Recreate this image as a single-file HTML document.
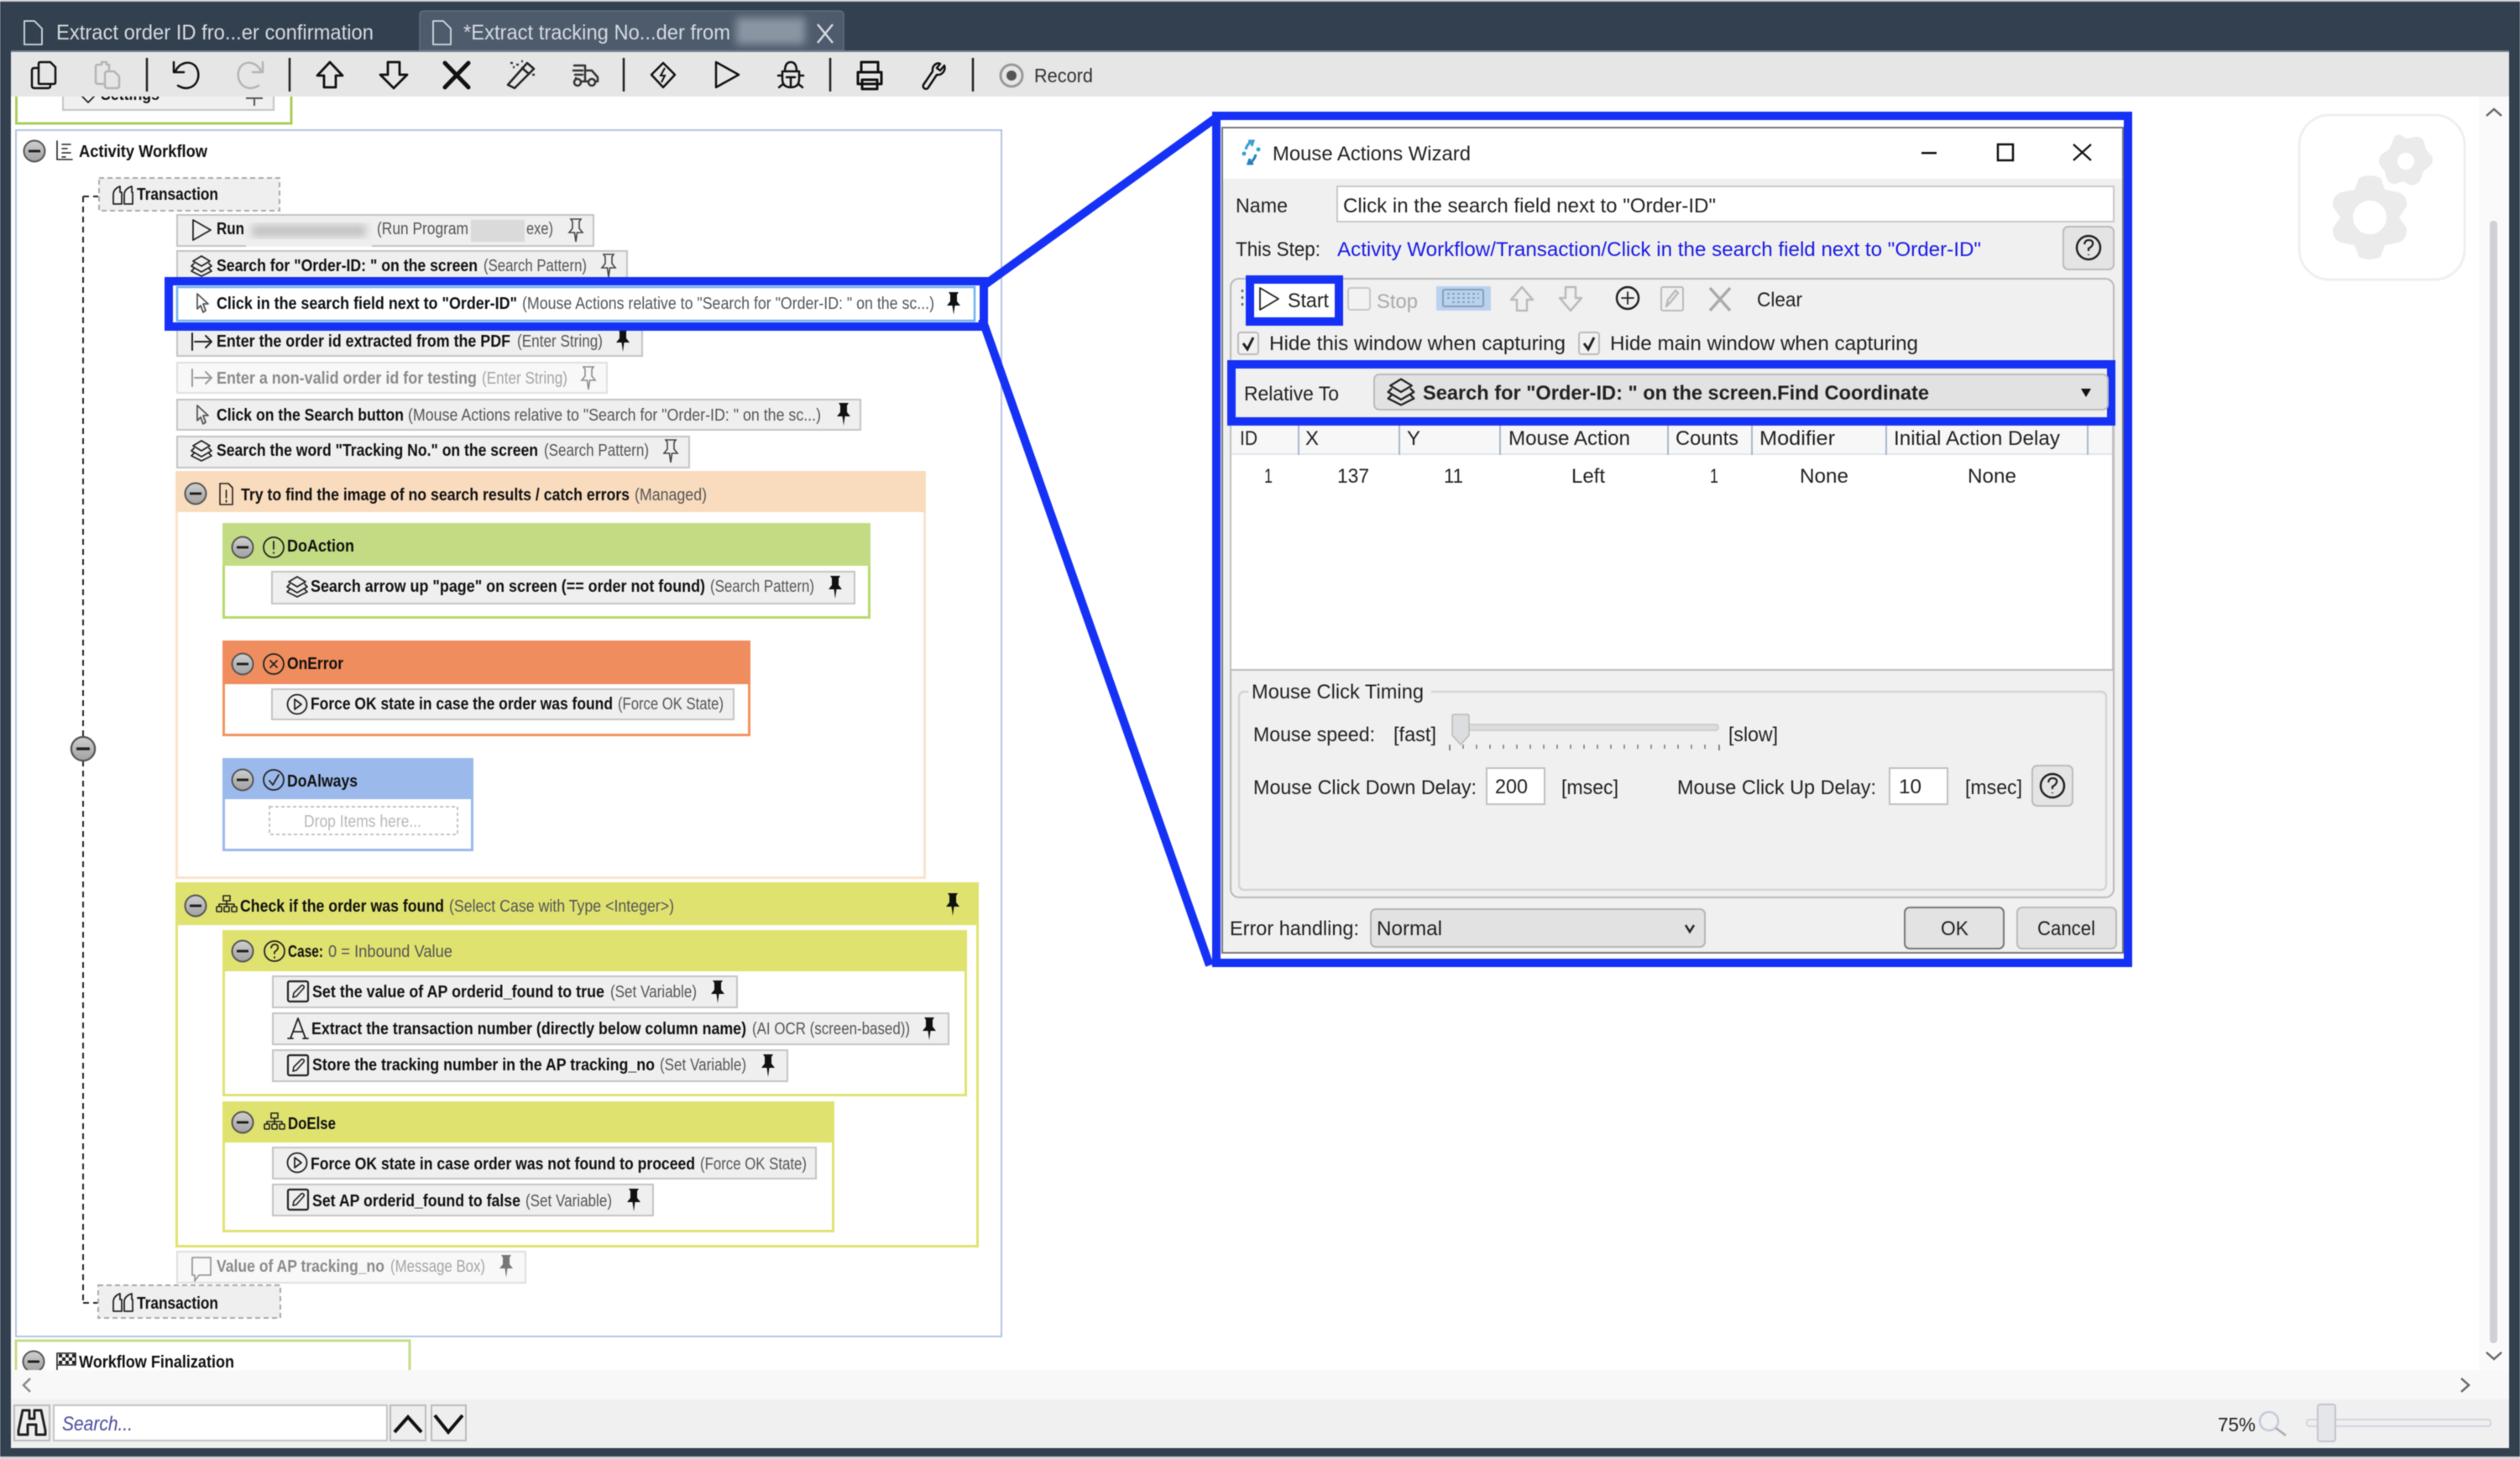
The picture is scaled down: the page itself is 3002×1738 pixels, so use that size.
<!DOCTYPE html>
<html><head><meta charset="utf-8"><title>Mouse Actions Wizard</title>
<style>
html,body{margin:0;padding:0;background:#fff;width:3002px;height:1738px;overflow:hidden}
svg{display:block;filter:blur(0.6px)}
text{font-family:"Liberation Sans",sans-serif;font-size:21px;fill:#111}
.b{font-weight:bold;font-size:20px;fill:#111}
.s{font-size:20px;fill:#555}
.gb{font-weight:bold;font-size:20px;fill:#8a8a8a}
.gs{font-size:20px;fill:#a5a5a5}
.d{font-size:24px;fill:#222}
.db{font-size:24px;fill:#222;font-weight:bold}
.t{font-size:25px;fill:#d5dae0}
.c{fill:#efefef;stroke:#c4c4c4;stroke-width:2}
.cd{fill:#f8f8f8;stroke:#e0e0e0;stroke-width:2}
.ic{fill:none;stroke:#222;stroke-width:1.8;stroke-linejoin:round;stroke-linecap:round}
.tb{fill:none;stroke:#111;stroke-width:3;stroke-linejoin:round;stroke-linecap:round}
.tg{fill:none;stroke:#b5b5b5;stroke-width:3;stroke-linejoin:round;stroke-linecap:round}
.dg{fill:none;stroke:#bbb;stroke-width:2.5;stroke-linejoin:round;stroke-linecap:round}
.sep{stroke:#222;stroke-width:2.5}
</style></head><body>
<svg width="3002" height="1738" viewBox="0 0 3002 1738" xmlns="http://www.w3.org/2000/svg">
<defs>
<linearGradient id="gm" x1="0" y1="0" x2="0" y2="1"><stop offset="0" stop-color="#cfcfcf"/><stop offset="1" stop-color="#a0a0a0"/></linearGradient>
<filter id="bl" x="-20%" y="-20%" width="140%" height="140%"><feGaussianBlur stdDeviation="5"/></filter>
<g id="min"><circle r="12.500" fill="url(#gm)" stroke="#555" stroke-width="2"/><rect x="-7" y="-1.500" width="14" height="3" fill="#222"/></g>
<g id="pf"><path d="M-6-14H6L4-11V-3L8 2H1.500L0 13-1.500 2H-8L-4-3V-11Z" fill="#111"/></g>
<g id="po"><path d="M-6-14H6L4-11V-3L8 2H1.500L0 13-1.500 2H-8L-4-3V-11Z" fill="none" stroke="#444" stroke-width="1.600"/></g>
<g id="pg"><path d="M-6-14H6L4-11V-3L8 2H1.500L0 13-1.500 2H-8L-4-3V-11Z" fill="#777"/></g>
<g id="st" class="ic"><path d="M0-12 10-6 0 0-10-6Z"/><path d="M-9-3-12 0 0 7 12 0 9-3"/><path d="M-9 3-12 6 0 12 12 6 9 3"/></g>
<g id="cu" class="ic" style="stroke:#555"><path d="M-5-11V7L-1 3 2 11 5 9 2 1H8Z"/></g>
<g id="en" class="ic" style="stroke-width:2"><path d="M-11-10V10M-8 0H12M5-7 12 0 5 7"/></g>
<g id="eg" class="ic" style="stroke:#999;stroke-width:2"><path d="M-11-10V10M-8 0H12M5-7 12 0 5 7"/></g>
<g id="ed" class="ic" style="stroke-width:2.200"><rect x="-12" y="-12" width="24" height="24" rx="2"/><path d="M-6 7-5 2 4-7Q6-8 7-6 8-5 6-3L-2 6Z" style="stroke-width:1.600"/></g>
<g id="pc" class="ic"><circle r="11.500"/><path d="M-3-6 5 0-3 6Z"/></g>
<g id="tr" class="ic"><path d="M-11 11V0Q-11-7-3-10V-3H-1V11ZM2 11V0Q2-7 11-10V-3H12V11Z"/></g>
<g id="tree" class="ic" style="stroke-width:1.600"><rect x="-4" y="-10" width="8" height="6"/><path d="M0-4V0M-9 3V0H9V3M0 0V3"/><rect x="-12" y="3" width="6" height="6" rx="1"/><rect x="-3" y="3" width="6" height="6" rx="1"/><rect x="6" y="3" width="6" height="6" rx="1"/></g>
</defs>

<!-- frame -->
<rect width="3002" height="1738" fill="#33404f"/>
<rect x="0" y="0" width="3002" height="2" fill="#c9ccd0"/>
<rect x="0" y="1735" width="3002" height="3" fill="#cfd2d6"/>
<rect x="13" y="115" width="2976" height="1610" fill="#fff"/>

<!-- top green box (under toolbar) -->
<path d="M19.500 100V147H347V100" fill="#fff" stroke="#a8cf5a" stroke-width="3"/>
<rect x="75" y="100" width="251" height="31" fill="#f0f0f0" stroke="#c4c4c4" stroke-width="2"/>
<path class="ic" d="M95 112 105 122 115 112"/>
<text class="b" x="120" y="119" textLength="70" lengthAdjust="spacingAndGlyphs">Settings</text>
<path d="M293 117H313M303 117V126" fill="none" stroke="#555" stroke-width="2"/>

<!-- tabs -->
<path class="ic" style="stroke:#d5dae0" d="M29 25H41L50 34V53H29Z"/>
<text class="t" x="67" y="47" textLength="378" lengthAdjust="spacingAndGlyphs">Extract order ID fro...er confirmation</text>
<path d="M500 60V18Q500 13 505 13H1000Q1005 13 1005 18V60Z" fill="#4d5b6d" stroke="#5f6c7d" stroke-width="1.500"/>
<path class="ic" style="stroke:#d5dae0" d="M516 25H528L537 34V53H516Z"/>
<text class="t" x="552" y="47" textLength="318" lengthAdjust="spacingAndGlyphs">*Extract tracking No...der from</text>
<rect x="877" y="21" width="82" height="32" fill="#8a95a3" filter="url(#bl)"/>
<path d="M974 29 992 51M992 29 974 51" stroke="#d5dae0" stroke-width="2.500" fill="none"/>

<!-- toolbar -->
<rect x="13" y="61" width="2976" height="54" fill="#e6e6e6"/>
<rect x="13" y="60" width="2976" height="2" fill="#75808d"/>
<path class="tb" style="stroke-width:2.500" d="M46 99V76Q46 74 48 74H60L66 80V98Q66 100 64 100H47Q46 100 46 99ZM46 81H41Q38 81 38 84V102Q38 105 41 105H57Q60 105 60 102V100"/>
<path class="tg" style="stroke-width:2.500" d="M125 100H117Q114 100 114 97V80Q114 77 117 77H121V74H127V77H130V85M125 88Q125 85 128 85H136L142 91V102Q142 105 139 105H128Q125 105 125 102Z"/>
<line class="sep" x1="175" y1="69" x2="175" y2="109"/>
<path class="tb" style="stroke-width:2.500" d="M207 74V86H219M209 85C213 75 226 71 233 79 240 88 236 105 221 105 217 105 214 103 212 102"/>
<path class="tg" style="stroke-width:2.500" d="M313 74V86H301M311 85C307 75 294 71 287 79 280 88 284 105 299 105 303 105 306 103 308 102"/>
<line class="sep" x1="345" y1="69" x2="345" y2="109"/>
<path class="tb" style="stroke-width:2.800" d="M393 74 408 90H400V104H386V90H378Z"/>
<path class="tb" style="stroke-width:2.800" d="M462 74H476V89H485L469 105 453 89H462Z"/>
<path d="M530 75 558 104M558 75 530 104" stroke="#111" stroke-width="5" stroke-linecap="round" fill="none"/>
<path class="ic" style="stroke-width:2.500" d="M605 101 628 75 636 82 613 105ZM622 81 630 88"/>
<path d="M608 75H611M615 77H618M621 73H623M634 89H637M611 80H613" stroke="#333" stroke-width="2.500" fill="none"/>
<path class="ic" style="stroke:#333;stroke-width:2.500" d="M684 78H697V97H692M697 84H705L712 92V97H709M683 84H694M685 89H694M686 93V97M697 97H701"/>
<circle cx="688" cy="98" r="4" fill="#e6e6e6" stroke="#333" stroke-width="2.500"/><circle cx="705" cy="98" r="4" fill="#e6e6e6" stroke="#333" stroke-width="2.500"/>
<line class="sep" x1="743" y1="69" x2="743" y2="109"/>
<path class="tb" style="stroke-width:2.500" d="M790 75 804 89 790 104 776 89Z"/>
<path d="M792 81 787 90H792L788 98" fill="none" stroke="#111" stroke-width="2"/>
<path class="tb" style="stroke-width:2.500" d="M853 74 880 89 853 104Z"/>
<path class="tb" style="stroke-width:2.500" d="M932 85H952V94Q952 104 942 104 932 104 932 94ZM935 85Q935 74 942 74 949 74 949 85M942 92V104M937 92H947M932 90H927M952 90H957M933 100 928 104M951 100 956 104"/>
<line class="sep" x1="989" y1="69" x2="989" y2="109"/>
<path class="tb" d="M1026 86V74H1046V86M1022 100V86H1050V100ZM1027 95H1045V106H1027Z"/>
<path class="tb" style="stroke-width:2.500" d="M1120 76C1116 74 1110 78 1111 85L1100 101C1098 105 1104 108 1106 104L1116 89C1122 90 1127 84 1125 78L1120 84 1116 81Z"/>
<line class="sep" x1="1159" y1="69" x2="1159" y2="109"/>
<circle cx="1205" cy="90" r="13" fill="none" stroke="#999" stroke-width="3"/><circle cx="1205" cy="90" r="6" fill="#555"/>
<text x="1232" y="98" style="font-size:23px;fill:#333" textLength="70" lengthAdjust="spacingAndGlyphs">Record</text>

<!-- scrollbars -->
<rect x="2953" y="115" width="35" height="1517" fill="#fafafa"/>
<path d="M2962 138 2971 130 2980 138" fill="none" stroke="#666" stroke-width="2.500"/>
<rect x="2966" y="263" width="9" height="1337" rx="4" fill="#d0d1d5"/>
<path d="M2962 1611 2971 1619 2980 1611" fill="none" stroke="#666" stroke-width="2.500"/>
<rect x="13" y="1632" width="2976" height="35" fill="#f8f8f8"/>
<path d="M2932 1642 2941 1650 2932 1658" fill="none" stroke="#666" stroke-width="2.500"/>
<rect x="13" y="1667" width="2976" height="58" fill="#f0f0f0"/>

<!-- gear box -->
<rect x="2739" y="137" width="197" height="196" rx="36" fill="#fff" stroke="#efefef" stroke-width="3"/>
<g fill="#ebebeb">
<path fill-rule="evenodd" d="M2810 212Q2823 206 2836 212L2841 226 2857 229Q2868 233 2867 246L2858 259 2867 272Q2868 285 2857 289L2841 292 2836 306Q2823 312 2810 306L2805 292 2789 289Q2778 285 2779 272L2788 259 2779 246Q2778 233 2789 229L2805 226Z M2823 239A20 20 0 1 0 2823.010 239Z"/>
<path fill-rule="evenodd" d="M2853 162Q2858 158 2866 165L2874 164Q2884 160 2888 170L2890 178 2897 186Q2900 194 2893 199L2887 204 2883 215Q2878 222 2870 220L2863 216 2854 219Q2846 220 2843 212L2841 204 2836 198Q2831 190 2838 183L2846 178Z M2866 182A10 10 0 1 0 2866.010 182Z"/>
</g>

<!-- activity workflow box -->
<rect x="19" y="155" width="1174" height="1437" fill="#fff" stroke="#b3c3e3" stroke-width="2"/>
<use href="#min" x="41" y="180"/>
<path class="ic" style="stroke-width:1.600" d="M68 168V190H86M74 172H84M74 177H80M74 182H84M74 187H78"/>
<text class="b" x="94" y="187" textLength="153" lengthAdjust="spacingAndGlyphs">Activity Workflow</text>

<path d="M99 234V1552M99 234H117M99 1552H117" fill="none" stroke="#222" stroke-width="2" stroke-dasharray="7 5"/>
<g transform="translate(99 892) scale(1.130)"><use href="#min"/></g>

<rect x="118" y="212" width="215" height="39" fill="#efefef" stroke="#aaa" stroke-width="2" stroke-dasharray="6 4"/>
<use href="#tr" x="146" y="232"/>
<text class="b" x="163" y="238" textLength="97" lengthAdjust="spacingAndGlyphs">Transaction</text>

<!-- Run -->
<rect class="c" x="211" y="256" width="496" height="37"/>
<path class="ic" d="M230 262 251 274 230 286Z"/>
<text class="b" x="258" y="279" textLength="33" lengthAdjust="spacingAndGlyphs">Run</text>
<rect x="293" y="258" width="150" height="36" fill="#eeeeee"/>
<rect x="300" y="268" width="136" height="14" fill="#c0c0c0" filter="url(#bl)"/>
<text class="s" x="449" y="279" textLength="109" lengthAdjust="spacingAndGlyphs">(Run Program</text>
<rect x="561" y="262" width="64" height="26" fill="#dadada"/>
<text class="s" x="627" y="279" textLength="32" lengthAdjust="spacingAndGlyphs">exe)</text>
<use href="#po" x="686" y="275"/>

<!-- Search -->
<rect class="c" x="211" y="299" width="536" height="36"/>
<use href="#st" x="240" y="317"/>
<text class="b" x="258" y="323" textLength="311" lengthAdjust="spacingAndGlyphs">Search for "Order-ID: " on the screen</text>
<text class="s" x="576" y="323" textLength="123" lengthAdjust="spacingAndGlyphs">(Search Pattern)</text>
<use href="#po" x="725" y="317"/>

<!-- Enter -->
<rect class="c" x="211" y="392" width="554" height="32"/>
<use href="#en" x="240" y="407"/>
<text class="b" x="258" y="413" textLength="350" lengthAdjust="spacingAndGlyphs">Enter the order id extracted from the PDF</text>
<text class="s" x="616" y="413" textLength="102" lengthAdjust="spacingAndGlyphs">(Enter String)</text>
<use href="#pf" x="742" y="406"/>

<!-- highlighted -->
<rect x="201" y="335" width="971" height="54" fill="#fff" stroke="#1531f5" stroke-width="10"/>
<rect x="211" y="342" width="950" height="40" fill="#fff" stroke="#6fb2ee" stroke-width="2.500"/>
<use href="#cu" x="240" y="361"/>
<text class="b" x="258" y="368" textLength="358" lengthAdjust="spacingAndGlyphs">Click in the search field next to "Order-ID"</text>
<text class="s" x="622" y="368" textLength="491" lengthAdjust="spacingAndGlyphs">(Mouse Actions relative to "Search for "Order-ID: " on the sc...)</text>
<use href="#pf" x="1136" y="362"/>

<!-- non-valid -->
<rect class="cd" x="211" y="432" width="512" height="36"/>
<use href="#eg" x="240" y="450"/>
<text class="gb" x="258" y="457" textLength="310" lengthAdjust="spacingAndGlyphs">Enter a non-valid order id for testing</text>
<text class="gs" x="574" y="457" textLength="102" lengthAdjust="spacingAndGlyphs">(Enter String)</text>
<use href="#po" x="701" y="451" opacity=".6"/>

<!-- click search -->
<rect class="c" x="211" y="476" width="814" height="36"/>
<use href="#cu" x="240" y="494"/>
<text class="b" x="258" y="501" textLength="223" lengthAdjust="spacingAndGlyphs">Click on the Search button</text>
<text class="s" x="486" y="501" textLength="492" lengthAdjust="spacingAndGlyphs">(Mouse Actions relative to "Search for "Order-ID: " on the sc...)</text>
<use href="#pf" x="1005" y="494"/>

<!-- search word -->
<rect class="c" x="211" y="520" width="610" height="37"/>
<use href="#st" x="240" y="537"/>
<text class="b" x="258" y="543" textLength="383" lengthAdjust="spacingAndGlyphs">Search the word "Tracking No." on the screen</text>
<text class="s" x="648" y="543" textLength="125" lengthAdjust="spacingAndGlyphs">(Search Pattern)</text>
<use href="#po" x="799" y="538"/>

<!-- Managed -->
<rect x="210.500" y="562.500" width="891" height="483" fill="#fff" stroke="#fbe3cb" stroke-width="3"/>
<rect x="209" y="561" width="894" height="49" fill="#f9dcbd"/>
<use href="#min" x="233" y="588"/>
<path class="ic" style="stroke-width:1.600" d="M262 576H272L277 581V601H262ZM269.500 584V593M269.500 596V598"/>
<text class="b" x="287" y="596" textLength="463" lengthAdjust="spacingAndGlyphs">Try to find the image of no search results / catch errors</text>
<text class="s" x="756" y="596" textLength="86" lengthAdjust="spacingAndGlyphs">(Managed)</text>

<!-- DoAction -->
<rect x="266.500" y="624.500" width="769" height="111" fill="#fff" stroke="#b5d96b" stroke-width="3"/>
<rect x="265" y="623" width="772" height="51" fill="#c3dc84"/>
<use href="#min" x="289" y="652"/>
<circle class="ic" cx="326" cy="652" r="12"/><path class="ic" d="M326 645V654M326 658V659"/>
<text class="b" x="342" y="657" textLength="80" lengthAdjust="spacingAndGlyphs">DoAction</text>
<rect class="c" x="324" y="681" width="694" height="38"/>
<use href="#st" x="354" y="699"/>
<text class="b" x="370" y="705" textLength="470" lengthAdjust="spacingAndGlyphs">Search arrow up "page" on screen (== order not found)</text>
<text class="s" x="846" y="705" textLength="124" lengthAdjust="spacingAndGlyphs">(Search Pattern)</text>
<use href="#pf" x="995" y="700"/>

<!-- OnError -->
<rect x="266.500" y="764.500" width="626" height="111" fill="#fff" stroke="#f2935f" stroke-width="3"/>
<rect x="265" y="763" width="629" height="52" fill="#f08d5e"/>
<use href="#min" x="289" y="791"/>
<circle class="ic" cx="326" cy="791" r="12"/><path class="ic" d="M322 787 330 795M330 787 322 795"/>
<text class="b" x="342" y="797" textLength="67" lengthAdjust="spacingAndGlyphs">OnError</text>
<rect class="c" x="324" y="821" width="550" height="36"/>
<use href="#pc" x="354" y="839"/>
<text class="b" x="370" y="845" textLength="360" lengthAdjust="spacingAndGlyphs">Force OK state in case the order was found</text>
<text class="s" x="736" y="845" textLength="126" lengthAdjust="spacingAndGlyphs">(Force OK State)</text>

<!-- DoAlways -->
<rect x="266.500" y="904.500" width="296" height="108" fill="#fff" stroke="#9cb9ec" stroke-width="3"/>
<rect x="265" y="903" width="299" height="49" fill="#9cb9ec"/>
<use href="#min" x="289" y="929"/>
<circle class="ic" cx="326" cy="929" r="12"/><path class="ic" d="M321 930 325 935 332 923"/>
<text class="b" x="342" y="937" textLength="84" lengthAdjust="spacingAndGlyphs">DoAlways</text>
<rect x="321" y="961" width="224" height="33" fill="#fff" stroke="#c4c4c4" stroke-width="2" stroke-dasharray="4 3"/>
<text x="362" y="985" style="font-size:20px;fill:#b8b8b8" textLength="140" lengthAdjust="spacingAndGlyphs">Drop Items here...</text>

<!-- Check -->
<rect x="210.500" y="1052.500" width="954" height="432" fill="#fff" stroke="#dfe36f" stroke-width="3"/>
<rect x="209" y="1051" width="957" height="51" fill="#dfe26f"/>
<use href="#min" x="233" y="1079"/>
<use href="#tree" x="270" y="1077"/>
<text class="b" x="286" y="1086" textLength="243" lengthAdjust="spacingAndGlyphs">Check if the order was found</text>
<text class="s" x="535" y="1086" textLength="268" lengthAdjust="spacingAndGlyphs">(Select Case with Type &lt;Integer&gt;)</text>
<use href="#pf" x="1135" y="1078"/>

<!-- Case -->
<rect x="266.500" y="1109.500" width="884" height="195" fill="#fff" stroke="#dfe36f" stroke-width="3"/>
<rect x="265" y="1108" width="887" height="49" fill="#dfe26f"/>
<use href="#min" x="289" y="1133"/>
<circle class="ic" cx="327" cy="1133" r="12"/><path class="ic" d="M323 1129Q324 1125 327 1125 332 1125 331 1130 330 1132 327 1134V1136M327 1140V1141"/>
<text class="b" x="343" y="1140" textLength="42" lengthAdjust="spacingAndGlyphs">Case:</text>
<text class="s" x="391" y="1140" textLength="148" lengthAdjust="spacingAndGlyphs">0 = Inbound Value</text>
<rect class="c" x="325" y="1163" width="553" height="37"/>
<use href="#ed" x="355" y="1181"/>
<text class="b" x="372" y="1188" textLength="348" lengthAdjust="spacingAndGlyphs">Set the value of AP orderid_found to true</text>
<text class="s" x="727" y="1188" textLength="103" lengthAdjust="spacingAndGlyphs">(Set Variable)</text>
<use href="#pf" x="855" y="1182"/>
<rect class="c" x="325" y="1207" width="805" height="37"/>
<path class="ic" d="M343 1237H349M361 1237H367M346 1237 355 1213 364 1237M349 1229H361"/>
<text class="b" x="371" y="1232" textLength="518" lengthAdjust="spacingAndGlyphs">Extract the transaction number (directly below column name)</text>
<text class="s" x="896" y="1232" textLength="188" lengthAdjust="spacingAndGlyphs">(AI OCR (screen-based))</text>
<use href="#pf" x="1107" y="1226"/>
<rect class="c" x="325" y="1251" width="613" height="37"/>
<use href="#ed" x="355" y="1269"/>
<text class="b" x="372" y="1275" textLength="408" lengthAdjust="spacingAndGlyphs">Store the tracking number in the AP tracking_no</text>
<text class="s" x="786" y="1275" textLength="103" lengthAdjust="spacingAndGlyphs">(Set Variable)</text>
<use href="#pf" x="915" y="1270"/>

<!-- DoElse -->
<rect x="266.500" y="1313.500" width="726" height="153" fill="#fff" stroke="#dfe36f" stroke-width="3"/>
<rect x="265" y="1312" width="729" height="49" fill="#dfe26f"/>
<use href="#min" x="289" y="1337"/>
<use href="#tree" x="327" y="1336"/>
<text class="b" x="343" y="1345" textLength="57" lengthAdjust="spacingAndGlyphs">DoElse</text>
<rect class="c" x="325" y="1367" width="647" height="37"/>
<use href="#pc" x="354" y="1385"/>
<text class="b" x="370" y="1393" textLength="458" lengthAdjust="spacingAndGlyphs">Force OK state in case order was not found to proceed</text>
<text class="s" x="834" y="1393" textLength="127" lengthAdjust="spacingAndGlyphs">(Force OK State)</text>
<rect class="c" x="325" y="1411" width="453" height="37"/>
<use href="#ed" x="355" y="1429"/>
<text class="b" x="372" y="1437" textLength="248" lengthAdjust="spacingAndGlyphs">Set AP orderid_found to false</text>
<text class="s" x="626" y="1437" textLength="103" lengthAdjust="spacingAndGlyphs">(Set Variable)</text>
<use href="#pf" x="755" y="1430"/>

<!-- Value -->
<rect class="cd" x="211" y="1491" width="415" height="37"/>
<path class="ic" style="stroke:#999" d="M229 1498H251V1519H237L232 1526V1519H229Z"/>
<text class="gb" x="258" y="1515" textLength="200" lengthAdjust="spacingAndGlyphs">Value of AP tracking_no</text>
<text class="gs" x="465" y="1515" textLength="113" lengthAdjust="spacingAndGlyphs">(Message Box)</text>
<use href="#pg" x="603" y="1509"/>

<rect x="117" y="1531" width="217" height="39" fill="#efefef" stroke="#aaa" stroke-width="2" stroke-dasharray="6 4"/>
<use href="#tr" x="146" y="1551"/>
<text class="b" x="163" y="1559" textLength="97" lengthAdjust="spacingAndGlyphs">Transaction</text>

<!-- finalization -->
<path d="M19 1632V1597H488V1632" fill="#fff" stroke="#c6dc88" stroke-width="3"/>
<use href="#min" x="40" y="1622"/>
<path class="ic" style="stroke-width:1.600" d="M68 1634V1612H90V1626H68"/>
<path d="M70 1613h4v4h-4zM78 1613h4v4h-4zM86 1613h4v4h-4zM74 1617h4v4h-4zM82 1617h4v4h-4zM70 1621h4v4h-4zM78 1621h4v4h-4zM86 1621h4v4h-4z" fill="#222"/>
<text class="b" x="94" y="1629" textLength="185" lengthAdjust="spacingAndGlyphs">Workflow Finalization</text>
<rect x="13" y="1632" width="600" height="35" fill="#f8f8f8"/>
<path d="M36 1642 28 1650 36 1658" fill="none" stroke="#888" stroke-width="2.500"/>

<!-- search bar -->
<rect x="17" y="1674" width="42" height="42" fill="#eee" stroke="#bbb" stroke-width="2"/>
<path class="ic" style="stroke-width:3" d="M27 1680H35V1690H41V1680H49L54 1704V1709H43V1697H33V1709H22V1704Z"/>
<rect x="64" y="1674" width="397" height="42" fill="#fff" stroke="#c4c4c4" stroke-width="2"/>
<text x="74" y="1704" style="font-size:24px;font-style:italic;fill:#4a4a9c" textLength="84" lengthAdjust="spacingAndGlyphs">Search...</text>
<rect x="465" y="1674" width="42" height="42" fill="#eee" stroke="#bbb" stroke-width="2"/>
<path d="M470 1706 486 1688 502 1706" fill="none" stroke="#111" stroke-width="4"/>
<rect x="514" y="1674" width="41" height="42" fill="#eee" stroke="#bbb" stroke-width="2"/>
<path d="M518 1686 534 1706 551 1686" fill="none" stroke="#111" stroke-width="4"/>

<!-- zoom -->
<text x="2642" y="1705" style="font-size:23px;fill:#222" textLength="45" lengthAdjust="spacingAndGlyphs">75%</text>
<circle cx="2703" cy="1693" r="11" fill="none" stroke="#c3cadc" stroke-width="2.500"/><path d="M2711 1701 2723 1710" stroke="#aaa" stroke-width="2.500"/>
<rect x="2748" y="1691" width="219" height="8" rx="3" fill="#efefef" stroke="#ccd" stroke-width="1.500"/>
<rect x="2761" y="1673" width="21" height="44" rx="3" fill="#e4e6e9" stroke="#c2c5ca" stroke-width="2"/>

<!-- connectors -->
<path d="M1172 340 1449 140" fill="none" stroke="#1531f5" stroke-width="10"/>
<path d="M1170 380 1441 1150" fill="none" stroke="#1531f5" stroke-width="10"/>

<!-- dialog -->
<rect x="1449" y="138" width="1086" height="1009" fill="#fff" stroke="#1531f5" stroke-width="10"/>
<rect x="1456" y="152" width="1073" height="983" fill="#f0f0f0" stroke="#777" stroke-width="2"/>
<rect x="1457" y="153" width="1071" height="60" fill="#fff"/>
<path d="M1484 178Q1486 170 1493 168M1487 168 1493 168 1491 174" fill="none" stroke="#3a9fd8" stroke-width="3"/>
<path d="M1496 184Q1494 192 1487 195M1493 195 1487 195 1489 189" fill="none" stroke="#2a7fb8" stroke-width="3"/>
<circle cx="1482" cy="183" r="2.500" fill="#3a9fd8"/><circle cx="1499" cy="178" r="2.500" fill="#3a9fd8"/>
<text class="d" x="1516" y="191" textLength="236" lengthAdjust="spacingAndGlyphs">Mouse Actions Wizard</text>
<rect x="2289" y="181" width="18" height="2.500" fill="#111"/>
<rect x="2380" y="172" width="18" height="19" fill="none" stroke="#111" stroke-width="2.500"/>
<path d="M2470 172 2491 191M2491 172 2470 191" stroke="#111" stroke-width="2.200"/>

<text class="d" x="1472" y="253" textLength="62" lengthAdjust="spacingAndGlyphs">Name</text>
<rect x="1593" y="222" width="925" height="42" fill="#fff" stroke="#c8c8c8" stroke-width="2"/>
<text class="d" x="1600" y="253" textLength="444" lengthAdjust="spacingAndGlyphs">Click in the search field next to "Order-ID"</text>
<text class="d" x="1472" y="305" textLength="101" lengthAdjust="spacingAndGlyphs">This Step:</text>
<text class="d" style="fill:#1a1ae6" x="1593" y="305" textLength="767" lengthAdjust="spacingAndGlyphs">Activity Workflow/Transaction/Click in the search field next to "Order-ID"</text>
<rect x="2458" y="270" width="60" height="51" rx="6" fill="#e4e4e4" stroke="#bbb" stroke-width="2"/>
<circle cx="2488" cy="295" r="14" fill="none" stroke="#222" stroke-width="2.500"/>
<path d="M2483 291Q2484 286 2488 286 2494 286 2493 291 2492 294 2488 296V299M2488 303V304" fill="none" stroke="#222" stroke-width="2.200"/>

<!-- group -->
<rect x="1466" y="332" width="1052" height="737" rx="10" fill="#f0f0f0" stroke="#b9b9b9" stroke-width="2"/>
<rect x="1489" y="333" width="106" height="50" fill="#fff"/>
<rect x="1489" y="333" width="106" height="50" fill="none" stroke="#1531f5" stroke-width="10"/>
<path d="M1480 345V348M1480 353V356M1480 361V364" stroke="#666" stroke-width="2.500"/>
<path class="ic" d="M1501 343 1523 356 1501 369Z"/>
<text class="d" x="1534" y="366" textLength="49" lengthAdjust="spacingAndGlyphs">Start</text>
<rect x="1606" y="343" width="26" height="26" rx="3" fill="#f2f2f2" stroke="#c8c8c8" stroke-width="2"/>
<text class="d" style="fill:#aaa" x="1640" y="367" textLength="49" lengthAdjust="spacingAndGlyphs">Stop</text>
<rect x="1711" y="341" width="65" height="29" fill="#b9d3ef"/>
<rect x="1719" y="345" width="48" height="20" rx="2" fill="none" stroke="#8a9db5" stroke-width="2"/>
<path d="M1724 350H1762M1724 355H1762M1730 360H1756" stroke="#8a9db5" stroke-width="2" stroke-dasharray="3 3"/>
<path class="dg" d="M1813 342 1826 357H1819V370H1807V357H1800Z"/>
<path class="dg" d="M1865 342H1877V355H1884L1871 370 1858 355H1865Z"/>
<circle class="ic" cx="1939" cy="355" r="13" style="stroke-width:2.500"/><path class="ic" d="M1939 348V362M1932 355H1946"/>
<rect x="1979" y="342" width="26" height="28" rx="2" fill="none" stroke="#bbb" stroke-width="2"/><path class="dg" d="M1985 365 1987 357 1996 346 1999 349 1990 360Z"/>
<path d="M2037 343 2061 370M2061 343 2037 370" stroke="#aaa" stroke-width="3.500"/>
<text class="d" x="2093" y="365" textLength="54" lengthAdjust="spacingAndGlyphs">Clear</text>

<rect x="1475" y="396" width="24" height="26" rx="3" fill="#f2f2f2" stroke="#bbb" stroke-width="2"/>
<path d="M1481 409 1486 416 1493 402" fill="none" stroke="#222" stroke-width="3"/>
<text class="d" x="1512" y="417" textLength="353" lengthAdjust="spacingAndGlyphs">Hide this window when capturing</text>
<rect x="1881" y="396" width="24" height="26" rx="3" fill="#f2f2f2" stroke="#bbb" stroke-width="2"/>
<path d="M1887 409 1892 416 1899 402" fill="none" stroke="#222" stroke-width="3"/>
<text class="d" x="1918" y="417" textLength="367" lengthAdjust="spacingAndGlyphs">Hide main window when capturing</text>

<!-- table -->
<rect x="1466" y="507" width="1051" height="291" fill="#fff"/>
<rect x="1466" y="507" width="1051" height="35" fill="#f7f7f7"/>
<rect x="1466" y="540" width="1051" height="2" fill="#dfe6f0"/>
<path d="M1547 507V542M1667 507V542M1787 507V542M1987 507V542M2087 507V542M2247 507V542M2487 507V542" stroke="#a9b7cc" stroke-width="2"/>
<rect x="1465" y="797" width="1053" height="2" fill="#bbb"/>
<path d="M1466 507V798M2517 507V798" stroke="#c0c0c0" stroke-width="2"/>
<text class="d" x="1477" y="530" textLength="21" lengthAdjust="spacingAndGlyphs">ID</text>
<text class="d" x="1555" y="530" textLength="16" lengthAdjust="spacingAndGlyphs">X</text>
<text class="d" x="1676" y="530" textLength="16" lengthAdjust="spacingAndGlyphs">Y</text>
<text class="d" x="1797" y="530" textLength="145" lengthAdjust="spacingAndGlyphs">Mouse Action</text>
<text class="d" x="1996" y="530" textLength="75" lengthAdjust="spacingAndGlyphs">Counts</text>
<text class="d" x="2096" y="530" textLength="90" lengthAdjust="spacingAndGlyphs">Modifier</text>
<text class="d" x="2256" y="530" textLength="198" lengthAdjust="spacingAndGlyphs">Initial Action Delay</text>
<text class="d" x="1506" y="575" textLength="10" lengthAdjust="spacingAndGlyphs">1</text>
<text class="d" x="1593" y="575" textLength="38" lengthAdjust="spacingAndGlyphs">137</text>
<text class="d" x="1720" y="575" textLength="23" lengthAdjust="spacingAndGlyphs">11</text>
<text class="d" x="1872" y="575" textLength="40" lengthAdjust="spacingAndGlyphs">Left</text>
<text class="d" x="2037" y="575" textLength="10" lengthAdjust="spacingAndGlyphs">1</text>
<text class="d" x="2144" y="575" textLength="58" lengthAdjust="spacingAndGlyphs">None</text>
<text class="d" x="2344" y="575" textLength="58" lengthAdjust="spacingAndGlyphs">None</text>

<!-- relative to -->
<rect x="1467" y="434" width="1048" height="68" fill="#f0f0f0" stroke="#1531f5" stroke-width="10"/>
<text class="d" x="1482" y="477" textLength="113" lengthAdjust="spacingAndGlyphs">Relative To</text>
<rect x="1637" y="446" width="874" height="42" rx="6" fill="#e2e2e2" stroke="#bbb" stroke-width="2"/>
<g transform="translate(1669 467) scale(1.280)"><use href="#st"/></g>
<text class="db" x="1695" y="476" textLength="603" lengthAdjust="spacingAndGlyphs">Search for "Order-ID: " on the screen.Find Coordinate</text>
<path d="M2479 463H2491L2485 473Z" fill="#111"/>

<!-- timing -->
<rect x="1476" y="824" width="1033" height="236" rx="6" fill="none" stroke="#d4d4d4" stroke-width="2.500"/>
<rect x="1487" y="815" width="218" height="20" fill="#f0f0f0"/>
<text class="d" x="1491" y="832" textLength="205" lengthAdjust="spacingAndGlyphs">Mouse Click Timing</text>
<text class="d" x="1493" y="883" textLength="145" lengthAdjust="spacingAndGlyphs">Mouse speed:</text>
<text class="d" x="1660" y="883" textLength="51" lengthAdjust="spacingAndGlyphs">[fast]</text>
<rect x="1733" y="863" width="314" height="7" rx="3" fill="#dcdcdc" stroke="#c8c8c8" stroke-width="1.500"/>
<path d="M1730 853Q1730 851 1733 851H1747Q1750 851 1750 853V876L1740 887 1730 876Z" fill="#dcdde0" stroke="#b9b9b9" stroke-width="1.500"/>
<path d="M1727 887V894M2048 887V894" stroke="#666" stroke-width="1.500"/>
<path d="M1743 887V892M1759 887V892M1775 887V892M1791 887V892M1807 887V892M1823 887V892M1839 887V892M1855 887V892M1871 887V892M1887 887V892M1903 887V892M1919 887V892M1935 887V892M1951 887V892M1967 887V892M1983 887V892M1999 887V892M2015 887V892M2031 887V892" stroke="#777" stroke-width="1.500"/>
<text class="d" x="2059" y="883" textLength="59" lengthAdjust="spacingAndGlyphs">[slow]</text>
<text class="d" x="1493" y="946" textLength="266" lengthAdjust="spacingAndGlyphs">Mouse Click Down Delay:</text>
<rect x="1771" y="915" width="69" height="43" fill="#fff" stroke="#c0c0c0" stroke-width="2"/>
<text class="d" x="1781" y="945" textLength="39" lengthAdjust="spacingAndGlyphs">200</text>
<text class="d" x="1860" y="946" textLength="68" lengthAdjust="spacingAndGlyphs">[msec]</text>
<text class="d" x="1998" y="946" textLength="237" lengthAdjust="spacingAndGlyphs">Mouse Click Up Delay:</text>
<rect x="2251" y="915" width="69" height="43" fill="#fff" stroke="#c0c0c0" stroke-width="2"/>
<text class="d" x="2262" y="945" textLength="27" lengthAdjust="spacingAndGlyphs">10</text>
<text class="d" x="2341" y="946" textLength="68" lengthAdjust="spacingAndGlyphs">[msec]</text>
<rect x="2421" y="912" width="48" height="48" rx="6" fill="#e4e4e4" stroke="#bbb" stroke-width="2"/>
<circle cx="2445" cy="936" r="14" fill="none" stroke="#222" stroke-width="2.500"/>
<path d="M2440 932Q2441 927 2445 927 2451 927 2450 932 2449 935 2445 937V940M2445 944V945" fill="none" stroke="#222" stroke-width="2.200"/>

<!-- bottom -->
<text class="d" x="1465" y="1114" textLength="154" lengthAdjust="spacingAndGlyphs">Error handling:</text>
<rect x="1633" y="1083" width="398" height="45" rx="6" fill="#e2e2e2" stroke="#b5b5b5" stroke-width="2"/>
<text class="d" x="1640" y="1114" textLength="78" lengthAdjust="spacingAndGlyphs">Normal</text>
<path d="M2008 1102 2013 1110 2018 1102" fill="none" stroke="#222" stroke-width="2.500"/>
<rect x="2269" y="1081" width="118" height="49" rx="6" fill="#e3e3e3" stroke="#777" stroke-width="2"/>
<text class="d" x="2312" y="1114" textLength="33" lengthAdjust="spacingAndGlyphs">OK</text>
<rect x="2403" y="1081" width="118" height="49" rx="6" fill="#e3e3e3" stroke="#bbb" stroke-width="2"/>
<text class="d" x="2427" y="1114" textLength="69" lengthAdjust="spacingAndGlyphs">Cancel</text>
</svg>
</body></html>
